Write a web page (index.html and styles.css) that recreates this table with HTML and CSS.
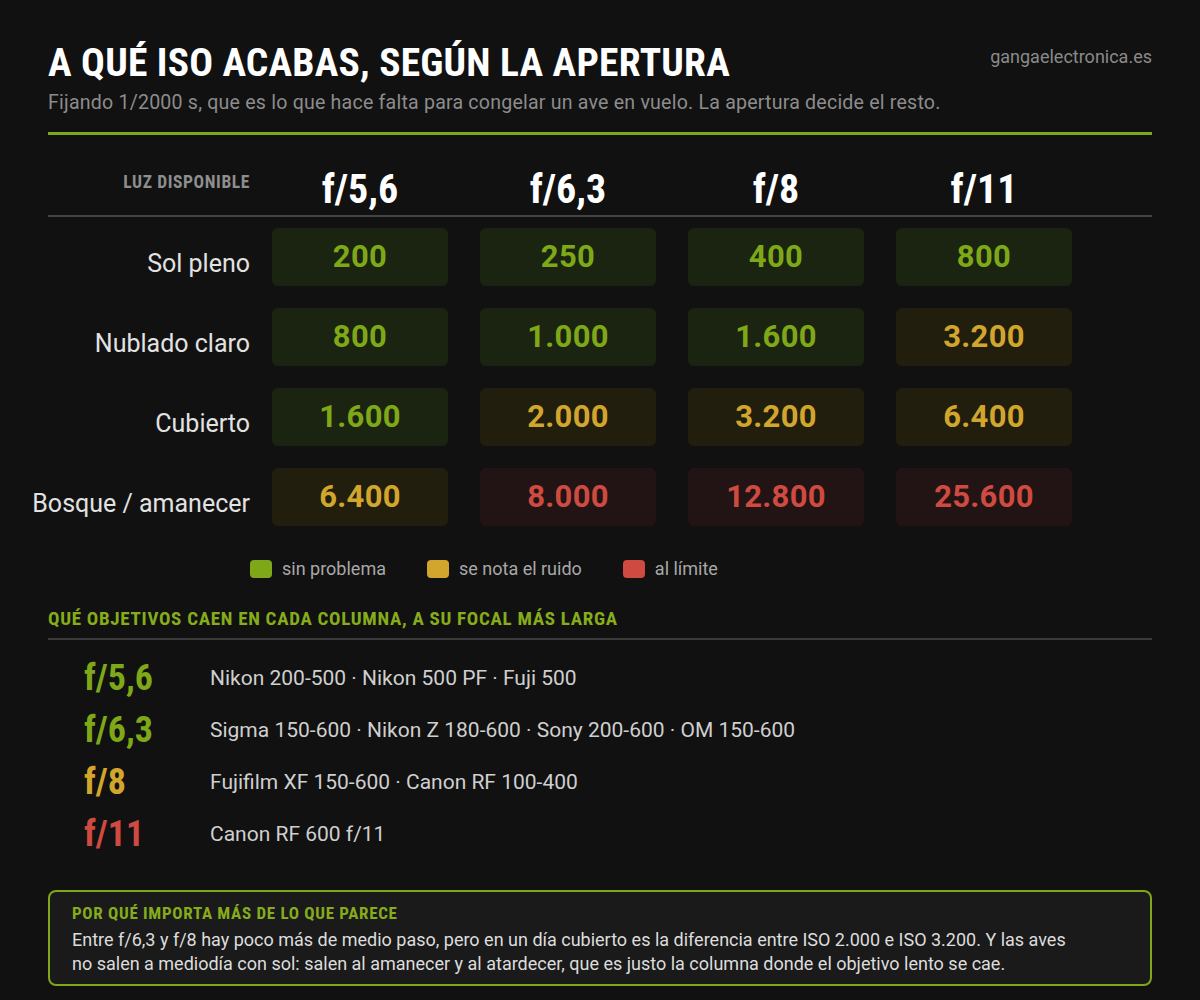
FILE: index.html
```html
<!DOCTYPE html>
<html lang="es">
<head>
<meta charset="utf-8">
<title>A qué ISO acabas</title>
<link rel="stylesheet" href="styles.css">
</head>
<body>
<div class="page">
  <header class="top">
    <div class="titles">
      <h1 class="title">A QUÉ ISO ACABAS, SEGÚN LA APERTURA</h1>
      <p class="subtitle">Fijando 1/2000 s, que es lo que hace falta para congelar un ave en vuelo. La apertura decide el resto.</p>
    </div>
    <div class="site">gangaelectronica.es</div>
  </header>

  <section class="table">
    <div class="row head">
      <div class="label small">LUZ DISPONIBLE</div>
      <div class="cells">
        <div class="colhead">f/5,6</div>
        <div class="colhead">f/6,3</div>
        <div class="colhead">f/8</div>
        <div class="colhead">f/11</div>
      </div>
    </div>
    <div class="row">
      <div class="label">Sol pleno</div>
      <div class="cells">
        <div class="cell ok">200</div>
        <div class="cell ok">250</div>
        <div class="cell ok">400</div>
        <div class="cell ok">800</div>
      </div>
    </div>
    <div class="row">
      <div class="label">Nublado claro</div>
      <div class="cells">
        <div class="cell ok">800</div>
        <div class="cell ok">1.000</div>
        <div class="cell ok">1.600</div>
        <div class="cell warn">3.200</div>
      </div>
    </div>
    <div class="row">
      <div class="label">Cubierto</div>
      <div class="cells">
        <div class="cell ok">1.600</div>
        <div class="cell warn">2.000</div>
        <div class="cell warn">3.200</div>
        <div class="cell warn">6.400</div>
      </div>
    </div>
    <div class="row">
      <div class="label">Bosque / amanecer</div>
      <div class="cells">
        <div class="cell warn">6.400</div>
        <div class="cell bad">8.000</div>
        <div class="cell bad">12.800</div>
        <div class="cell bad">25.600</div>
      </div>
    </div>
  </section>

  <div class="legend">
    <div class="item"><span class="sw sw-ok"></span>sin problema</div>
    <div class="item"><span class="sw sw-warn"></span>se nota el ruido</div>
    <div class="item"><span class="sw sw-bad"></span>al límite</div>
  </div>

  <h2 class="section">QUÉ OBJETIVOS CAEN EN CADA COLUMNA, A SU FOCAL MÁS LARGA</h2>
  <ul class="lenses">
    <li><span class="ap c-ok">f/5,6</span><span class="names">Nikon 200-500 · Nikon 500 PF · Fuji 500</span></li>
    <li><span class="ap c-ok">f/6,3</span><span class="names">Sigma 150-600 · Nikon Z 180-600 · Sony 200-600 · OM 150-600</span></li>
    <li><span class="ap c-warn">f/8</span><span class="names">Fujifilm XF 150-600 · Canon RF 100-400</span></li>
    <li><span class="ap c-bad">f/11</span><span class="names">Canon RF 600 f/11</span></li>
  </ul>

  <aside class="note">
    <h3 class="note-title">POR QUÉ IMPORTA MÁS DE LO QUE PARECE</h3>
    <p class="note-text">Entre f/6,3 y f/8 hay poco más de medio paso, pero en un día cubierto es la diferencia entre ISO 2.000 e ISO 3.200. Y las aves<br>no salen a mediodía con sol: salen al amanecer y al atardecer, que es justo la columna donde el objetivo lento se cae.</p>
  </aside>
</div>
</body>
</html>
```
FILE: styles.css
```css
* { box-sizing: border-box; }
html, body { margin: 0; padding: 0; }
body {
  background: #111111;
  color: #dddddd;
  font-family: Roboto, "Noto Sans", "Liberation Sans", sans-serif;
  width: 1200px;
  height: 1000px;
  overflow: hidden;
}
.page {
  padding: 40px 48px 0 48px;
}
.top {
  display: flex;
  justify-content: space-between;
  align-items: flex-start;
  border-bottom: 3px solid #7fa818;
  padding-bottom: 17px;
}
.title {
  margin: 0;
  font-family: "Roboto Condensed", Roboto, sans-serif;
  font-stretch: 75%;
  font-weight: 700;
  font-size: 39.5px;
  line-height: 46px;
  color: #ffffff;
  letter-spacing: 0.2px;
}
.subtitle {
  margin: 5px 0 0 0;
  font-size: 19.6px;
  line-height: 24px;
  letter-spacing: 0.2px;
  color: #8c8c8c;
}
.site {
  font-size: 18px;
  color: #8a8a8a;
  margin-top: 6px;
}

.table {
  margin-top: 28px;
}
.row {
  display: flex;
  align-items: center;
  margin-bottom: 22px;
}
.row.head {
  align-items: flex-start;
  border-bottom: 2px solid #444444;
  height: 54px;
  margin-bottom: 11px;
}
.label {
  width: 202px;
  flex: none;
  display: flex;
  justify-content: flex-end;
  font-size: 25px;
  color: #e2e2e2;
  padding-top: 12px;
  white-space: nowrap;
}
.label.small {
  font-family: "Roboto Condensed", Roboto, sans-serif;
  font-stretch: 75%;
  font-weight: 700;
  font-size: 17.5px;
  line-height: 20px;
  letter-spacing: 0.6px;
  color: #8e8e8e;
  padding-top: 9px;
}
.cells {
  display: flex;
  gap: 32px;
  margin-left: 22px;
}
.colhead {
  width: 176px;
  text-align: center;
  font-family: "Roboto Condensed", Roboto, sans-serif;
  font-stretch: 75%;
  font-weight: 700;
  font-size: 40px;
  line-height: 48px;
  color: #ffffff;
  padding-top: 3px;
}
.cell {
  width: 176px;
  height: 58px;
  border-radius: 6px;
  display: flex;
  align-items: center;
  justify-content: center;
  font-weight: 700;
  font-size: 31px;
  letter-spacing: 0.3px;
  padding-bottom: 1px;
}
.cell.ok { background: #1b2410; color: #7fa818; }
.cell.warn { background: #221e0e; color: #d2a62c; }
.cell.bad { background: #221414; color: #cf4a40; }

.legend {
  display: flex;
  gap: 41px;
  margin-left: 202px;
  margin-top: 32px;
}
.item {
  display: flex;
  align-items: center;
  font-size: 18px;
  line-height: 22px;
  color: #a8a8a8;
}
.sw {
  width: 22px;
  height: 18px;
  border-radius: 4px;
  margin-right: 10px;
}
.sw-ok { background: #7fa818; }
.sw-warn { background: #d2a62c; }
.sw-bad { background: #cf4a40; }

.section {
  margin: 28px 0 0 0;
  font-family: "Roboto Condensed", Roboto, sans-serif;
  font-stretch: 75%;
  font-weight: 700;
  font-size: 19px;
  line-height: 22px;
  letter-spacing: 0.7px;
  color: #86ac1c;
  padding-bottom: 8px;
  border-bottom: 2px solid #3c3c3c;
}
.lenses {
  list-style: none;
  margin: 12px 0 0 0;
  padding: 0;
}
.lenses li {
  display: flex;
  align-items: center;
  height: 52px;
}
.ap {
  width: 162px;
  flex: none;
  padding-left: 36px;
  font-family: "Roboto Condensed", Roboto, sans-serif;
  font-stretch: 75%;
  font-weight: 700;
  font-size: 36px;
}
.c-ok { color: #7fa818; }
.c-warn { color: #d2a62c; }
.c-bad { color: #cf4a40; }
.names {
  font-size: 21px;
  color: #cfcfcf;
}

.note {
  margin-top: 30px;
  border: 2px solid #7fa818;
  border-radius: 8px;
  background: #1a1a1a;
  padding: 11px 22px 8px 22px;
}
.note-title {
  margin: 0;
  font-family: "Roboto Condensed", Roboto, sans-serif;
  font-stretch: 75%;
  font-weight: 700;
  font-size: 17px;
  line-height: 20px;
  letter-spacing: 0.7px;
  color: #86ac1c;
}
.note-text {
  margin: 5px 0 0 0;
  font-size: 18px;
  line-height: 24px;
  color: #dddddd;
}
```
